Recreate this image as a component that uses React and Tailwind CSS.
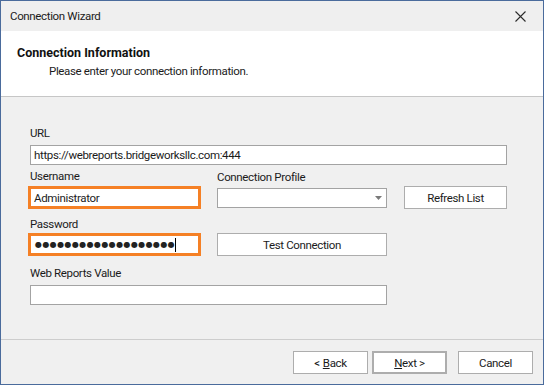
import React from 'react';

const font = "font-['Roboto',sans-serif]";

const Btn = ({ children, className = '' }) => (
  <button className={`h-[23px] bg-white border border-[#adadad] text-[11.5px] text-[#1b1b1b] flex items-center justify-center ${className}`}>
    {children}
  </button>
);

const App = () => {
  return (
    <div className={`w-[544px] h-[385px] border border-[#4a6b9c] bg-[#f0f0f0] flex flex-col ${font} text-[11.5px] tracking-[-0.35px] text-[#1b1b1b] leading-[16px]`}>
      {/* title bar */}
      <div className="h-[30px] shrink-0 flex items-center justify-between pl-[9px] pr-[17px] bg-[#efefef]">
        <span>Connection Wizard</span>
        <svg width="11" height="11" viewBox="0 0 11 11" className="text-[#2b2b2b]">
          <path d="M0.5 0.5 L10.5 10.5 M10.5 0.5 L0.5 10.5" stroke="currentColor" strokeWidth="1.1" />
        </svg>
      </div>

      {/* header */}
      <div className="h-[66px] shrink-0 bg-white border-b border-[#c6c6c6] pl-[16px] pt-[14px]">
        <div className="font-bold text-[12.5px] tracking-normal text-[#111]">Connection Information</div>
        <div className="pl-[32px] mt-[2px]">Please enter your connection information.</div>
      </div>

      {/* body */}
      <div className="flex-1 pl-[29px] pt-[28px]">
        <div>URL</div>
        <div className="mt-[4px] w-[477px] h-[20px] bg-white border border-[#a3a3a3] flex items-center pl-[3px]">
          https://webreports.bridgeworksllc.com:444
        </div>

        <div className="flex items-start mt-[3px]">
          <div className="w-[187px]">
            <div>Username</div>
            <div className="mt-[2px] -ml-[2px] w-[173px] h-[23px] border-[3px] border-[#f58025] bg-white flex items-center pl-[3px]">
              Administrator
            </div>
          </div>
          <div className="w-[187px] pt-[1px]">
            <div>Connection Profile</div>
            <div className="mt-[3px] w-[170px] h-[20px] bg-white border border-[#a3a3a3] flex items-center justify-end pr-[4px]">
              <svg width="7" height="4" viewBox="0 0 7 4">
                <path d="M0 0 H7 L3.5 4 Z" fill="#7a7a7a" />
              </svg>
            </div>
          </div>
          <div className="pt-[18px]">
            <Btn className="w-[103px]">Refresh List</Btn>
          </div>
        </div>

        <div className="flex items-start mt-[7px]">
          <div className="w-[187px]">
            <div>Password</div>
            <div className="mt-[1px] -ml-[2px] w-[173px] h-[23px] border-[3px] border-[#f58025] bg-white flex items-center pl-[4px]">
              <span className="font-['DejaVu_Sans',sans-serif] text-[8px] tracking-[0.4px] text-[#222]">●●●●●●●●●●●●●●●●●●●</span>
              <span className="w-[1px] h-[14px] bg-black" />
            </div>
          </div>
          <div className="pt-[17px]">
            <Btn className="w-[170px]">Test Connection</Btn>
          </div>
        </div>

        <div className="mt-[9px]">Web Reports Value</div>
        <div className="mt-[4px] w-[357px] h-[20px] bg-white border border-[#a3a3a3]" />
      </div>

      {/* footer */}
      <div className="h-[45px] shrink-0 border-t border-[#cdcdcd] flex items-start justify-end pt-[11px] pr-[10px]">
        <Btn className="w-[75px]">&lt; <span className="underline ml-[3px]">B</span>ack</Btn>
        <Btn className="w-[75px] ml-[4px] border-2 border-[#4a6b9c]"><span className="underline">N</span>ext &gt;</Btn>
        <Btn className="w-[75px] ml-[11px]">Cancel</Btn>
      </div>
    </div>
  );
};

export default App;
